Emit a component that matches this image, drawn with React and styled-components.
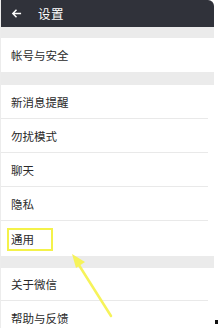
import styled, { createGlobalStyle } from "styled-components"

const GlobalStyle = createGlobalStyle`
    body {
        margin: 0;
        background: #ffffff;
        font-family: "Noto Sans CJK SC", "Noto Sans", sans-serif;
    }
`

const Screen = styled.div`
    position: relative;
    width: 214px;
    height: 328px;
    overflow: hidden;
    border-left: 1px solid #ececec;
    box-sizing: border-box;
`

const Header = styled.div`
    height: 27px;
    background-color: #30323a;
    border-top-right-radius: 6px;
    display: flex;
    align-items: center;
    color: #fff;
    padding-left: 10px;
    gap: 16px;
`

const BackIcon = styled.svg`
    width: 11px;
    height: 11px;
`

const Title = styled.span`
    font-size: 12.5px;
    letter-spacing: 0.5px;
`

const Gap = styled.div`
    height: ${(p) => p.$h}px;
    background-color: #ebebeb;
`

const Row = styled.div`
    height: ${(p) => p.$h || 34}px;
    display: flex;
    align-items: center;
    padding-left: 10px;
    font-size: 11.5px;
    color: #2a2a2a;
    border-bottom: ${(p) => (p.$last ? "none" : "1px solid #e9e9e9")};
    margin-right: 6px;
    box-sizing: border-box;
`

const Section = styled.div`
    background: #fff;
`

const Highlight = styled.div`
    position: absolute;
    left: 6px;
    top: 228px;
    width: 46px;
    height: 23px;
    border: 2px solid #f4f24a;
    box-sizing: border-box;
`

const Arrow = styled.svg`
    position: absolute;
    left: 60px;
    top: 248px;
    width: 60px;
    height: 72px;
`

const Dot = styled.div`
    position: absolute;
    left: 215px;
    top: 320px;
    width: 3px;
    height: 4px;
    background: #111;
`

export default function App() {
    return (
        <>
            <GlobalStyle />
            <Screen>
                <Header>
                    <BackIcon viewBox="0 0 12 12" fill="none" stroke="#fff" strokeWidth="1.6">
                        <path d="M11 6H2M6 2L2 6l4 4" />
                    </BackIcon>
                    <Title>设置</Title>
                </Header>
                <Gap $h={11} />
                <Section>
                    <Row $h={34} $last>帐号与安全</Row>
                </Section>
                <Gap $h={13} />
                <Section>
                    <Row>新消息提醒</Row>
                    <Row>勿扰模式</Row>
                    <Row>聊天</Row>
                    <Row>隐私</Row>
                    <Row $h={35} $last>通用</Row>
                </Section>
                <Gap $h={12} />
                <Section>
                    <Row $h={33}>关于微信</Row>
                    <Row $last>帮助与反馈</Row>
                </Section>
                <Highlight />
                <Arrow viewBox="0 0 60 72">
                    <path d="M50 68L16 14" stroke="#f6f35a" strokeWidth="2.5" strokeLinecap="round" />
                    <path d="M11 6L24 14L15 20Z" fill="#f6f35a" />
                </Arrow>
            </Screen>
            <Dot />
        </>
    )
}
